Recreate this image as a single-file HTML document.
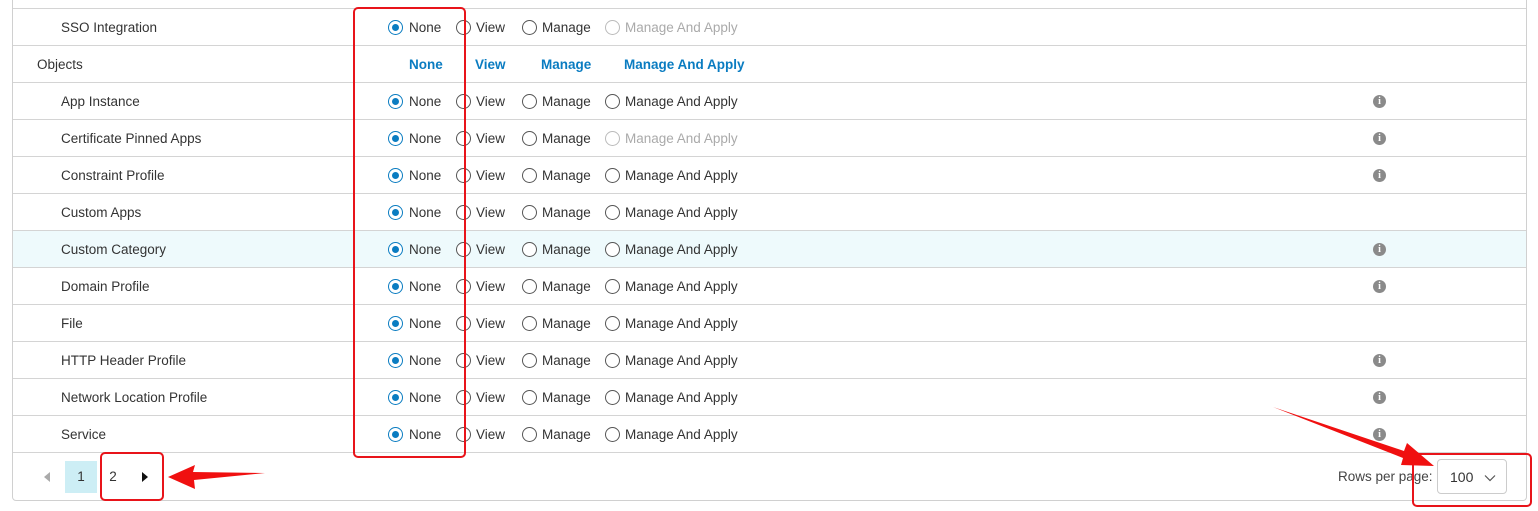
<!DOCTYPE html>
<html><head><meta charset="utf-8"><style>
*{margin:0;padding:0;box-sizing:border-box}
body{width:1538px;height:511px;background:#fff;font-family:"Liberation Sans",sans-serif;font-size:13.5px;color:#333;position:relative;overflow:hidden}
.box{position:absolute;left:12px;top:-6px;width:1515px;height:507px;border:1px solid #d0d0d0;border-radius:4px}
.row{position:absolute;left:13px;width:1513px;height:37px;border-top:1px solid #d4d4d4}
.row.hl{background:#eefafc}
.t{position:absolute;top:11px;white-space:nowrap}
.r{position:absolute;top:11px;width:15px;height:15px;border:1px solid #555;border-radius:50%;background:#fff}
.r.on{border:1.5px solid #0a7cc1}
.r.on::after{content:"";position:absolute;left:2.5px;top:2.5px;width:7px;height:7px;border-radius:50%;background:#0a7cc1}
.r.dis{border-color:#bbb}
.dis-t{color:#aaa}
.lk{color:#0a7cc1;font-weight:bold}
.i{position:absolute;left:1360px;top:12px;width:13px;height:13px;border-radius:50%;background:#8a8a8a;color:#fff;font-size:10px;font-weight:bold;text-align:center;line-height:13px;font-family:"Liberation Serif",serif}
.red{position:absolute;border:2px solid #e8141a;border-radius:5px}
</style></head><body>
<div class="box"></div>

<div class="row" style="top:8px"><span class="t" style="left:48px">SSO Integration</span>
<span class="r on" style="left:375px"></span><span class="t" style="left:396px">None</span>
<span class="r" style="left:443px"></span><span class="t" style="left:463px">View</span>
<span class="r" style="left:509px"></span><span class="t" style="left:529px">Manage</span>
<span class="r dis" style="left:592px"></span><span class="t dis-t" style="left:612px">Manage And Apply</span></div>

<div class="row" style="top:45px"><span class="t" style="left:24px">Objects</span>
<span class="t lk" style="left:396px">None</span><span class="t lk" style="left:462px">View</span><span class="t lk" style="left:528px">Manage</span><span class="t lk" style="left:611px">Manage And Apply</span></div>

<div class="row" style="top:82px"><span class="t" style="left:48px">App Instance</span>
<span class="r on" style="left:375px"></span><span class="t" style="left:396px">None</span><span class="r" style="left:443px"></span><span class="t" style="left:463px">View</span><span class="r" style="left:509px"></span><span class="t" style="left:529px">Manage</span><span class="r" style="left:592px"></span><span class="t" style="left:612px">Manage And Apply</span><span class="i">i</span></div>

<div class="row" style="top:119px"><span class="t" style="left:48px">Certificate Pinned Apps</span>
<span class="r on" style="left:375px"></span><span class="t" style="left:396px">None</span><span class="r" style="left:443px"></span><span class="t" style="left:463px">View</span><span class="r" style="left:509px"></span><span class="t" style="left:529px">Manage</span><span class="r dis" style="left:592px"></span><span class="t dis-t" style="left:612px">Manage And Apply</span><span class="i">i</span></div>

<div class="row" style="top:156px"><span class="t" style="left:48px">Constraint Profile</span>
<span class="r on" style="left:375px"></span><span class="t" style="left:396px">None</span><span class="r" style="left:443px"></span><span class="t" style="left:463px">View</span><span class="r" style="left:509px"></span><span class="t" style="left:529px">Manage</span><span class="r" style="left:592px"></span><span class="t" style="left:612px">Manage And Apply</span><span class="i">i</span></div>

<div class="row" style="top:193px"><span class="t" style="left:48px">Custom Apps</span>
<span class="r on" style="left:375px"></span><span class="t" style="left:396px">None</span><span class="r" style="left:443px"></span><span class="t" style="left:463px">View</span><span class="r" style="left:509px"></span><span class="t" style="left:529px">Manage</span><span class="r" style="left:592px"></span><span class="t" style="left:612px">Manage And Apply</span></div>

<div class="row hl" style="top:230px"><span class="t" style="left:48px">Custom Category</span>
<span class="r on" style="left:375px"></span><span class="t" style="left:396px">None</span><span class="r" style="left:443px"></span><span class="t" style="left:463px">View</span><span class="r" style="left:509px"></span><span class="t" style="left:529px">Manage</span><span class="r" style="left:592px"></span><span class="t" style="left:612px">Manage And Apply</span><span class="i">i</span></div>

<div class="row" style="top:267px"><span class="t" style="left:48px">Domain Profile</span>
<span class="r on" style="left:375px"></span><span class="t" style="left:396px">None</span><span class="r" style="left:443px"></span><span class="t" style="left:463px">View</span><span class="r" style="left:509px"></span><span class="t" style="left:529px">Manage</span><span class="r" style="left:592px"></span><span class="t" style="left:612px">Manage And Apply</span><span class="i">i</span></div>

<div class="row" style="top:304px"><span class="t" style="left:48px">File</span>
<span class="r on" style="left:375px"></span><span class="t" style="left:396px">None</span><span class="r" style="left:443px"></span><span class="t" style="left:463px">View</span><span class="r" style="left:509px"></span><span class="t" style="left:529px">Manage</span><span class="r" style="left:592px"></span><span class="t" style="left:612px">Manage And Apply</span></div>

<div class="row" style="top:341px"><span class="t" style="left:48px">HTTP Header Profile</span>
<span class="r on" style="left:375px"></span><span class="t" style="left:396px">None</span><span class="r" style="left:443px"></span><span class="t" style="left:463px">View</span><span class="r" style="left:509px"></span><span class="t" style="left:529px">Manage</span><span class="r" style="left:592px"></span><span class="t" style="left:612px">Manage And Apply</span><span class="i">i</span></div>

<div class="row" style="top:378px"><span class="t" style="left:48px">Network Location Profile</span>
<span class="r on" style="left:375px"></span><span class="t" style="left:396px">None</span><span class="r" style="left:443px"></span><span class="t" style="left:463px">View</span><span class="r" style="left:509px"></span><span class="t" style="left:529px">Manage</span><span class="r" style="left:592px"></span><span class="t" style="left:612px">Manage And Apply</span><span class="i">i</span></div>

<div class="row" style="top:415px"><span class="t" style="left:48px">Service</span>
<span class="r on" style="left:375px"></span><span class="t" style="left:396px">None</span><span class="r" style="left:443px"></span><span class="t" style="left:463px">View</span><span class="r" style="left:509px"></span><span class="t" style="left:529px">Manage</span><span class="r" style="left:592px"></span><span class="t" style="left:612px">Manage And Apply</span><span class="i">i</span></div>

<div class="row" style="top:452px;height:48px;background:transparent"></div>

<!-- pagination -->
<div style="position:absolute;left:44px;top:472px;width:0;height:0;border-top:5px solid transparent;border-bottom:5px solid transparent;border-right:6px solid #aaa"></div>
<div style="position:absolute;left:65px;top:461px;width:32px;height:32px;background:#cdeef5;text-align:center;line-height:32px">1</div>
<div style="position:absolute;left:101px;top:461px;width:24px;height:32px;text-align:center;line-height:32px">2</div>
<div style="position:absolute;left:142px;top:472px;width:0;height:0;border-top:5px solid transparent;border-bottom:5px solid transparent;border-left:6px solid #111"></div>

<span style="position:absolute;left:1338px;top:469px;color:#444">Rows per page:</span>
<div style="position:absolute;left:1437px;top:459px;width:70px;height:35px;border:1px solid #ccc;border-radius:4px"><span style="position:absolute;left:12px;top:9px;font-size:14px">100</span>
<svg style="position:absolute;left:46px;top:14px" width="12" height="8"><path d="M1 1.5L6 6.5L11 1.5" fill="none" stroke="#555" stroke-width="1.2"/></svg></div>

<!-- red annotations -->
<div class="red" style="left:353px;top:7px;width:113px;height:451px"></div>
<div class="red" style="left:100px;top:452px;width:64px;height:49px"></div>
<div class="red" style="left:1412px;top:453px;width:120px;height:54px"></div>
<svg style="position:absolute;left:0;top:0" width="1538" height="511">
<polygon points="168,477 195,465 193,472 265,473 194,480 195,489" fill="#f01010"/>
<polygon points="1273,407 1404,451 1407,443 1434,466 1401,465 1403,458" fill="#f01010"/>
</svg>
</body></html>
